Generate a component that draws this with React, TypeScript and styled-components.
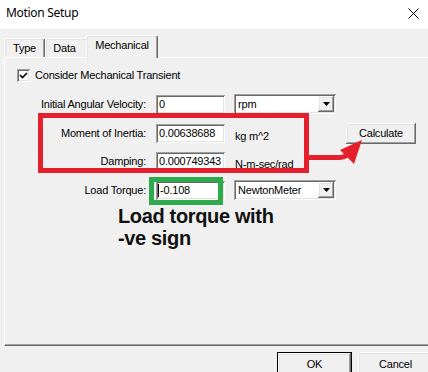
import React from "react";
import styled, { createGlobalStyle, css } from "styled-components";

const GlobalStyle = createGlobalStyle`
  html, body { margin: 0; padding: 0; background: #f0f0f0; }
  body {
    width: 428px; height: 372px; overflow: hidden;
    font-family: "Liberation Sans", Arial, sans-serif;
    color: #000;
  }
`;

const raised = css`
  background: #f0f0f0;
  box-shadow: inset -1px -1px #696969, inset 1px 1px #ffffff,
    inset -2px -2px #a0a0a0, inset 2px 2px #e3e3e3;
`;

const sunken = css`
  box-shadow: inset 1px 1px #a0a0a0, inset -1px -1px #ffffff,
    inset 2px 2px #696969, inset -2px -2px #e3e3e3;
`;

const Window = styled.div`
  width: 428px;
  height: 372px;
  display: flex;
  flex-direction: column;
  overflow: hidden;
  background: #f0f0f0;
  font-size: 11px;
  letter-spacing: -0.2px;
`;

const TitleBar = styled.div`
  height: 29px;
  flex: none;
  box-sizing: border-box;
  background: #ffffff;
  display: flex;
  align-items: flex-start;
  justify-content: space-between;
  padding: 0 9px 0 6px;
`;

const Title = styled.span`
  font-family: "Segoe UI", "Noto Sans", sans-serif;
  font-size: 12px;
  letter-spacing: -0.3px;
  line-height: 16px;
  margin-top: 5px;
`;

const CloseBox = styled.span`
  display: flex;
  margin-top: 8px;
`;

const Body = styled.div`
  flex: 1;
  display: flex;
  flex-direction: column;
  padding: 6px 0 0 4px;
  min-height: 0;
`;

const TabStrip = styled.div`
  display: flex;
  align-items: flex-end;
  height: 22px;
  flex: none;
`;

const Tab = styled.div<{ $active?: boolean; $w: number; $shift?: number }>`
  position: relative;
  box-sizing: border-box;
  width: ${(p) => p.$w}px;
  height: ${(p) => (p.$active ? 23 : 19)}px;
  margin-bottom: ${(p) => (p.$active ? -1 : 0)}px;
  margin-left: ${(p) => (p.$active ? -2 : 0)}px;
  z-index: ${(p) => (p.$active ? 2 : 1)};
  padding: 3px ${(p) => p.$shift ?? 0}px 0 0;
  text-align: center;
  line-height: 13px;
  background: #f0f0f0;
  border-left: 1px solid #ffffff;
  border-top: 1px solid #ffffff;
  border-right: 1px solid #696969;
  border-top-left-radius: 2px;
  border-top-right-radius: 2px;
  box-shadow: inset -1px 0 #a0a0a0, inset 1px 1px #e3e3e3;
`;

const Panel = styled.div`
  position: relative;
  height: 289px;
  flex: none;
  box-sizing: border-box;
  margin-right: -20px;
  border-top: 1px solid #ffffff;
  border-left: 1px solid #ffffff;
  border-bottom: 1px solid #696969;
  box-shadow: inset 0 -1px #a0a0a0;
  padding: 11px 0 0 12px;
  display: flex;
  flex-direction: column;
`;

const CheckRow = styled.div`
  display: flex;
  align-items: center;
  gap: 5px;
  height: 13px;
  line-height: 13px;
`;

const CheckBox = styled.span`
  width: 13px;
  height: 13px;
  box-sizing: border-box;
  background: #ffffff;
  display: flex;
  align-items: center;
  justify-content: center;
  ${sunken};
`;

const Form = styled.div`
  margin-top: 13px;
  display: grid;
  grid-template-columns: 139px 78px 112px 70px;
  grid-auto-rows: 19px;
  row-gap: 9.5px;
`;

const Label = styled.div<{ $row: number }>`
  grid-column: 1;
  grid-row: ${(p) => p.$row};
  text-align: right;
  padding-right: 10px;
  line-height: 19px;
  white-space: nowrap;
`;

const TextBox = styled.div<{ $row: number }>`
  grid-column: 2;
  grid-row: ${(p) => p.$row};
  width: 69px;
  height: 19px;
  box-sizing: border-box;
  background: #ffffff;
  padding-left: 3px;
  line-height: 19px;
  white-space: nowrap;
  overflow: hidden;
  display: flex;
  align-items: center;
  ${sunken};
`;

const Caret = styled.span`
  width: 1px;
  height: 13px;
  background: #000;
  margin-right: 1px;
  margin-left: -1px;
`;

const Unit = styled.div<{ $row: number }>`
  grid-column: 3;
  grid-row: ${(p) => p.$row};
  padding: 3px 0 0 1px;
  line-height: 19px;
  white-space: nowrap;
`;

const Combo = styled.div<{ $row: number }>`
  grid-column: 3;
  grid-row: ${(p) => p.$row};
  width: 102px;
  height: 20px;
  margin-top: -1px;
  box-sizing: border-box;
  background: #ffffff;
  display: flex;
  align-items: stretch;
  padding: 2px;
  ${sunken};
`;

const ComboText = styled.span`
  flex: 1;
  padding-left: 2px;
  line-height: 16px;
`;

const ComboButton = styled.span`
  width: 16px;
  display: flex;
  align-items: center;
  justify-content: center;
  ${raised};
`;

const PushButton = styled.button<{ $default?: boolean }>`
  font-family: "Liberation Sans", Arial, sans-serif;
  font-size: 11px;
  letter-spacing: -0.2px;
  color: #000;
  width: 75px;
  height: 23px;
  box-sizing: border-box;
  padding: 0;
  cursor: default;
  border: ${(p) => (p.$default ? "1px solid #000" : "none")};
  ${raised};
`;

const CalcButton = styled(PushButton)`
  grid-column: 4;
  grid-row: 2;
  width: 70px;
  height: 21px;
  margin-top: -1px;
`;

const Note = styled.div`
  margin: 5px 0 0 101px;
  font-weight: bold;
  font-size: 20px;
  line-height: 22px;
  letter-spacing: -0.35px;
  color: #111;
`;

const Highlight = styled.div<{ $color: string; $l: number; $t: number; $w: number; $h: number }>`
  position: absolute;
  left: ${(p) => p.$l}px;
  top: ${(p) => p.$t}px;
  width: ${(p) => p.$w}px;
  height: ${(p) => p.$h}px;
  box-sizing: border-box;
  border: 5px solid ${(p) => p.$color};
  pointer-events: none;
`;

const ArrowLayer = styled.svg`
  position: absolute;
  left: 295px;
  top: 77px;
`;

const Footer = styled.div`
  display: flex;
  justify-content: flex-end;
  gap: 6px;
  padding-top: 6px;
  margin-right: -5px;
`;

const DownArrow = () => (
  <svg width="7" height="4" viewBox="0 0 7 4">
    <path d="M0 0 H7 L3.5 4 Z" fill="#000" />
  </svg>
);

export default function App() {
  return (
    <>
      <GlobalStyle />
      <Window>
        <TitleBar>
          <Title>Motion Setup</Title>
          <CloseBox>
            <svg width="11" height="11" viewBox="0 0 11 11">
              <path d="M0.5 0.5 L10.5 10.5 M10.5 0.5 L0.5 10.5" stroke="#000" strokeWidth="1" />
            </svg>
          </CloseBox>
        </TitleBar>
        <Body>
          <TabStrip>
            <Tab $w={41}>Type</Tab>
            <Tab $w={43} $shift={4}>Data</Tab>
            <Tab $w={72} $active>Mechanical</Tab>
          </TabStrip>
          <Panel>
            <CheckRow>
              <CheckBox>
                <svg width="9" height="9" viewBox="0 0 9 9">
                  <path d="M1 4 L3.5 6.5 L8 2" stroke="#000" strokeWidth="1.7" fill="none" />
                </svg>
              </CheckBox>
              <span>Consider Mechanical Transient</span>
            </CheckRow>
            <Form>
              <Label $row={1}>Initial Angular Velocity:</Label>
              <TextBox $row={1}>0</TextBox>
              <Combo $row={1}>
                <ComboText>rpm</ComboText>
                <ComboButton><DownArrow /></ComboButton>
              </Combo>

              <Label $row={2}>Moment of Inertia:</Label>
              <TextBox $row={2}>0.00638688</TextBox>
              <Unit $row={2}>kg m^2</Unit>
              <CalcButton>Calculate</CalcButton>

              <Label $row={3}>Damping:</Label>
              <TextBox $row={3}>0.000749343</TextBox>
              <Unit $row={3}>N-m-sec/rad</Unit>

              <Label $row={4}>Load Torque:</Label>
              <TextBox $row={4}><Caret />-0.108</TextBox>
              <Combo $row={4}>
                <ComboText>NewtonMeter</ComboText>
                <ComboButton><DownArrow /></ComboButton>
              </Combo>
            </Form>
            <Note>
              Load torque with
              <br />
              -ve sign
            </Note>

            <Highlight $color="#e3202b" $l={33} $t={55} $w={271} $h={60} />
            <Highlight $color="#2caa4c" $l={144} $t={119} $w={74} $h={28} />
            <ArrowLayer width="70" height="35" viewBox="0 0 70 35">
              <path d="M9 22.5 L40 22.5 Q44 22.5 47 20" stroke="#e3202b" strokeWidth="5" fill="none" />
              <path d="M62 5 L40 15 L54 29 Z" fill="#e3202b" />
            </ArrowLayer>
          </Panel>
          <Footer>
            <PushButton $default>OK</PushButton>
            <PushButton>Cancel</PushButton>
          </Footer>
        </Body>
      </Window>
    </>
  );
}
